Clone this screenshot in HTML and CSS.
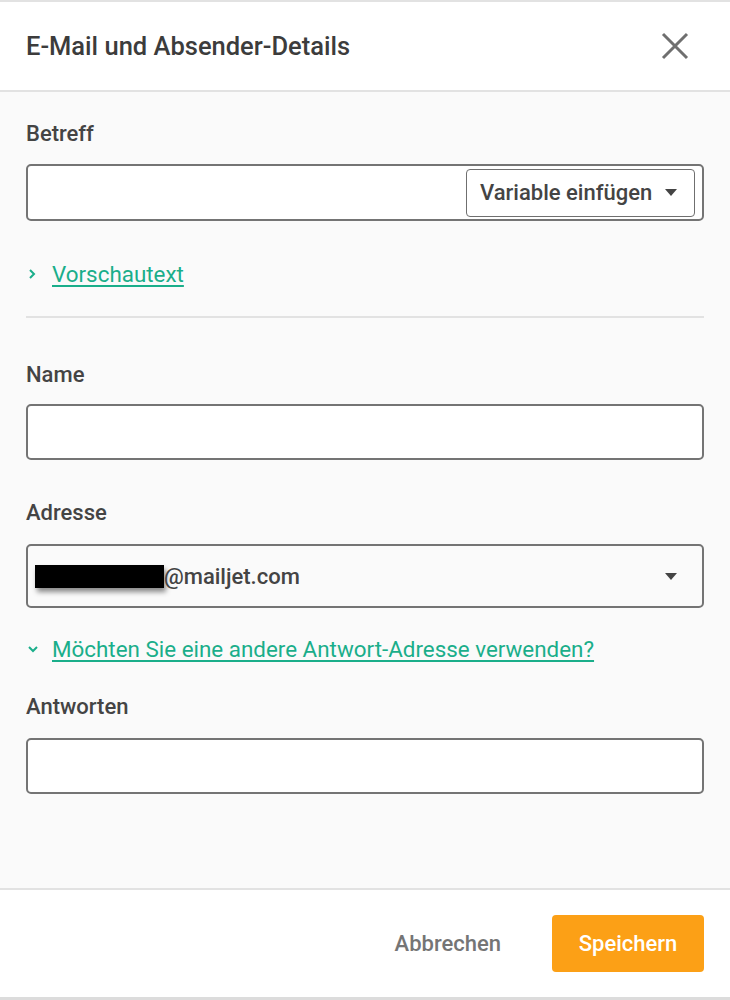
FILE: index.html
```html
<!DOCTYPE html>
<html lang="de">
<head>
<meta charset="utf-8">
<link rel="stylesheet" href="styles.css">
</head>
<body>
<div class="modal">
  <header class="head">
    <h1 class="title">E-Mail und Absender-Details</h1>
    <button class="close" aria-label="Schließen">
      <svg width="28" height="28" viewBox="0 0 28 28"><path d="M2 2 L26 26 M26 2 L2 26" stroke="#6f6f6f" stroke-width="3" fill="none"/></svg>
    </button>
  </header>
  <main class="body">
    <label class="label lbl-first">Betreff</label>
    <div class="field field-subject">
      <button class="var-btn">Variable einfügen <span class="caret"></span></button>
    </div>
    <a class="toggle toggle-1" href="#"><span class="chev">
      <svg width="12" height="12" viewBox="0 0 12 12"><path d="M3 2 L7 6 L3 10" stroke="#1aae8a" stroke-width="2" fill="none"/></svg>
    </span><span class="link">Vorschautext</span></a>
    <hr class="divider">
    <label class="label lbl-name">Name</label>
    <div class="field"></div>
    <label class="label lbl-addr">Adresse</label>
    <div class="field select">
      <span class="value"><span class="redact"></span>@mailjet.com</span>
      <span class="caret"></span>
    </div>
    <a class="toggle toggle-2" href="#"><span class="chev">
      <svg width="12" height="12" viewBox="0 0 12 12"><path d="M2 4 L6 8 L10 4" stroke="#1aae8a" stroke-width="2" fill="none"/></svg>
    </span><span class="link">Möchten Sie eine andere Antwort-Adresse verwenden?</span></a>
    <label class="label lbl-reply">Antworten</label>
    <div class="field"></div>
  </main>
  <footer class="foot">
    <button class="cancel">Abbrechen</button>
    <button class="save">Speichern</button>
  </footer>
</div>
</body>
</html>
```

FILE: styles.css
```css
* { box-sizing: border-box; }
html, body { margin: 0; padding: 0; }
body {
  width: 730px;
  height: 1000px;
  font-family: Roboto, "Liberation Sans", sans-serif;
  background: #fafafa;
  color: #444;
}
.modal {
  height: 1000px;
  display: flex;
  flex-direction: column;
  border-top: 2px solid #e2e2e2;
  border-bottom: 3px solid #dcdcdc;
}
.head {
  height: 90px;
  flex: none;
  background: #fff;
  border-bottom: 2px solid #e2e2e2;
  display: flex;
  align-items: center;
  justify-content: space-between;
  padding: 0 41px 0 26px;
}
.title {
  margin: 0;
  font-size: 25.5px;
  line-height: 30px;
  font-weight: 500;
  color: #3c3c3c;
}
.close {
  border: 0;
  background: none;
  padding: 0;
  width: 28px;
  height: 28px;
  display: flex;
  cursor: pointer;
}
.body {
  flex: 1;
  padding: 0 26px;
  display: flex;
  flex-direction: column;
}
.label {
  display: block;
  font-size: 22px;
  line-height: 24px;
  font-weight: 500;
  color: #444;
  margin-bottom: 19px;
}
.lbl-first { margin-top: 30px; margin-bottom: 18px; }
.lbl-name { margin-top: 45px; margin-bottom: 17px; }
.lbl-addr { margin-top: 41px; margin-bottom: 19px; }
.lbl-reply { margin-top: 34px; margin-bottom: 19px; }
.field {
  height: 56px;
  background: #fff;
  border: 2px solid #747474;
  border-radius: 5px;
  display: flex;
  align-items: center;
}
.field-subject {
  height: 57px;
  justify-content: flex-end;
  padding-right: 7px;
}
.var-btn {
  height: 48px;
  width: 229px;
  background: #fff;
  border: 1.5px solid #6f6f6f;
  border-radius: 4px;
  font-family: inherit;
  font-size: 22px;
  font-weight: 500;
  color: #444;
  display: flex;
  align-items: center;
  padding: 0 0 0 13px;
  gap: 13px;
}
.caret {
  width: 0;
  height: 0;
  border-left: 6.5px solid transparent;
  border-right: 6.5px solid transparent;
  border-top: 7px solid #444;
  display: inline-block;
}
.toggle {
  display: flex;
  align-items: center;
  text-decoration: none;
  font-size: 22.4px;
  line-height: 24px;
  color: #1aae8a;
}
.chev {
  width: 26px;
  display: flex;
  align-items: center;
  padding-left: 1px;
}
.link {
  text-decoration: underline;
  text-decoration-thickness: 2px;
  text-underline-offset: 3px;
}
.toggle-1 { margin-top: 41px; }
.toggle-2 { margin-top: 29px; }
.divider {
  border: 0;
  border-top: 2px solid #e2e2e2;
  margin: 30px 0 0;
  height: 0;
}
.select {
  height: 64px;
  background: #fafafa;
  justify-content: space-between;
  padding: 0 25px 0 7px;
}
.value {
  font-size: 22px;
  font-weight: 500;
  color: #444;
  display: flex;
  align-items: center;
}
.redact {
  width: 129px;
  height: 23px;
  background: #000;
  box-shadow: 2px 4px 5px rgba(0,0,0,0.45);
}
.foot {
  height: 109px;
  flex: none;
  background: #fff;
  border-top: 2px solid #e2e2e2;
  display: flex;
  align-items: center;
  justify-content: flex-end;
  padding: 0 26px 0 0;
  gap: 51px;
}
.cancel {
  border: 0;
  background: none;
  font-family: inherit;
  font-size: 22px;
  font-weight: 500;
  color: #757575;
  padding: 0;
}
.save {
  width: 152px;
  height: 57px;
  border: 0;
  border-radius: 4px;
  background: #fca016;
  color: #fff;
  font-family: inherit;
  font-size: 22px;
  font-weight: 500;
}
```
